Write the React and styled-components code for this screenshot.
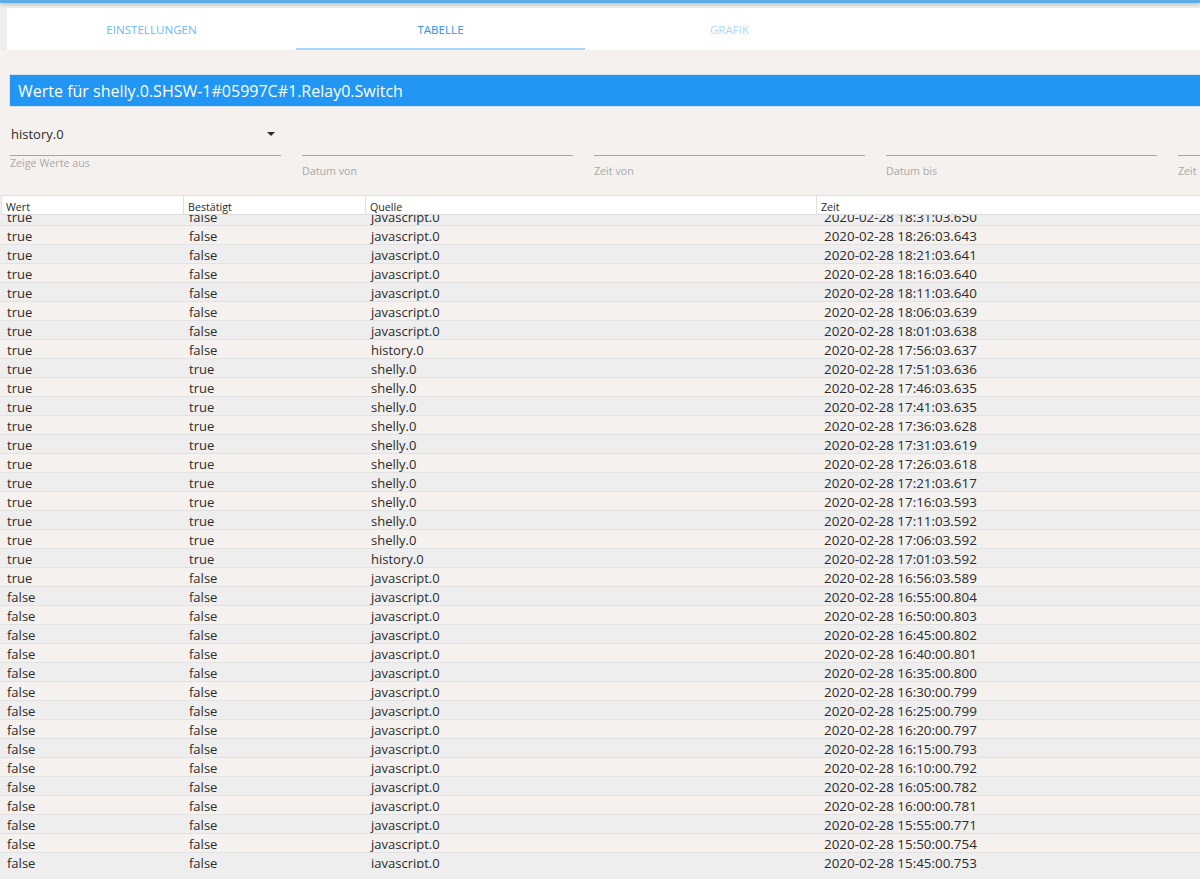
import React from 'react'
import styled, { createGlobalStyle } from 'styled-components'

const GlobalStyle = createGlobalStyle`
  html, body {
    margin: 0;
    height: 100%;
    overflow: hidden;
    background: #eeeeee;
    font-family: "Open Sans", "Noto Sans", "Liberation Sans", sans-serif;
  }
`

const times = [
  '18:31:03.650', '18:26:03.643', '18:21:03.641', '18:16:03.640', '18:11:03.640', '18:06:03.639', '18:01:03.638',
  '17:56:03.637', '17:51:03.636', '17:46:03.635', '17:41:03.635', '17:36:03.628', '17:31:03.619', '17:26:03.618',
  '17:21:03.617', '17:16:03.593', '17:11:03.592', '17:06:03.592', '17:01:03.592', '16:56:03.589', '16:55:00.804',
  '16:50:00.803', '16:45:00.802', '16:40:00.801', '16:35:00.800', '16:30:00.799', '16:25:00.799', '16:20:00.797',
  '16:15:00.793', '16:10:00.792', '16:05:00.782', '16:00:00.781', '15:55:00.771', '15:50:00.754', '15:45:00.753',
]

const rows = times.map((time, i) => {
  let source = 'javascript.0'
  if (i === 7 || i === 18) source = 'history.0'
  else if (i > 7 && i < 18) source = 'shelly.0'
  return {
    value: i < 20 ? 'true' : 'false',
    acked: i > 7 && i < 19 ? 'true' : 'false',
    source,
    time: '2020-02-28 ' + time,
  }
})

const filters = [
  { label: 'Datum von' },
  { label: 'Zeit von' },
  { label: 'Datum bis' },
  { label: 'Zeit bis' },
]

export default function App() {
  return (
    <Page>
      <GlobalStyle />
      <TopBar />
      <Tabs>
        <Tab>EINSTELLUNGEN</Tab>
        <Tab $active>TABELLE</Tab>
        <Tab $disabled>GRAFIK</Tab>
      </Tabs>
      <Content>
        <Title>Werte für shelly.0.SHSW-1#05997C#1.Relay0.Switch</Title>
        <FilterRow>
          <SelectField>
            <SelectValue>
              history.0
              <Caret />
            </SelectValue>
            <FieldLabel>Zeige Werte aus</FieldLabel>
          </SelectField>
          {filters.map(f => (
            <InputField key={f.label}>
              <InputLine />
              <FieldLabel $gap={8}>{f.label}</FieldLabel>
            </InputField>
          ))}
        </FilterRow>
        <HeaderRow>
          <HeaderCell>Wert</HeaderCell>
          <HeaderCell>Bestätigt</HeaderCell>
          <HeaderCell>Quelle</HeaderCell>
          <HeaderCell>Zeit</HeaderCell>
        </HeaderRow>
      </Content>
      <TableBody>
        <Scrolled>
          {rows.map((r, i) => (
            <Row key={r.time} $odd={i % 2 === 0}>
              <Cell>{r.value}</Cell>
              <Cell>{r.acked}</Cell>
              <Cell>{r.source}</Cell>
              <TimeCell>{r.time}</TimeCell>
            </Row>
          ))}
        </Scrolled>
      </TableBody>
    </Page>
  )
}

const Page = styled.div`
  width: 1200px;
  height: 879px;
  overflow: hidden;
`

const TopBar = styled.div`
  height: 3px;
  background: #5fabe8;
  box-shadow: 0 1px 4px rgba(0, 0, 0, 0.3);
`

const Tabs = styled.div`
  display: flex;
  height: 42px;
  margin: 5px 0 0 7px;
  background: #ffffff;
`

const Tab = styled.div`
  width: 289px;
  box-sizing: border-box;
  padding-top: 14px;
  text-align: center;
  font-size: 11.6px;
  line-height: 16px;
  color: ${p => (p.$disabled ? '#afd8f9' : p.$active ? '#2196f3' : '#6db9f6')};
  border-bottom: 2px solid ${p => (p.$active ? '#a9d5fa' : 'transparent')};
`

const Content = styled.div`
  background: #f5f1ee;
  padding-top: 25px;
  height: 165px;
  box-sizing: border-box;
`

const Title = styled.div`
  height: 31px;
  margin-left: 10px;
  padding-left: 8px;
  background: #2196f3;
  box-shadow: 0 0 0 1px rgba(33, 150, 243, 0.15);
  color: #ffffff;
  font-size: 16px;
  line-height: 32px;
`

const FilterRow = styled.div`
  display: flex;
  gap: 21px;
  height: 89px;
  margin-left: 10px;
`

const SelectField = styled.div`
  flex: 0 0 271px;
  padding-top: 18px;
`

const SelectValue = styled.div`
  display: flex;
  justify-content: space-between;
  height: 31px;
  font-size: 13px;
  line-height: 20px;
  color: #2b2b2b;
  border-bottom: 1px solid #a9a5a3;
  padding: 0 6px 0 1px;
`

const Caret = styled.span`
  width: 0;
  height: 0;
  margin-top: 8px;
  border-left: 4px solid transparent;
  border-right: 4px solid transparent;
  border-top: 4px solid #2b2b2b;
`

const FieldLabel = styled.div`
  margin-top: ${p => p.$gap || 0}px;
  font-size: 10.7px;
  line-height: 14px;
  color: #a9a9a9;
`

const InputField = styled.div`
  flex: 0 0 271px;
  padding-top: 49px;
`

const InputLine = styled.div`
  border-bottom: 1px solid #a9a5a3;
`

const columns = '182px 182px 451px 1fr'

const HeaderRow = styled.div`
  display: grid;
  grid-template-columns: ${columns};
  height: 20px;
  margin-left: 1px;
  background: #ffffff;
  border-top: 1px solid #e0e0e0;
  border-bottom: 1px solid #dcdcdc;
  box-sizing: border-box;
`

const HeaderCell = styled.div`
  padding: 4px 0 0 4px;
  border-left: 1px solid #e0e0e0;
  font-size: 10.7px;
  line-height: 14px;
  color: #2b2b2b;
`

const TableBody = styled.div`
  height: 653px;
  overflow: hidden;
`

const Scrolled = styled.div`
  margin-top: -8px;
`

const Row = styled.div`
  display: grid;
  grid-template-columns: ${columns};
  height: 19px;
  box-sizing: border-box;
  background: ${p => (p.$odd ? '#eeeeee' : '#f5f1ee')};
  border-bottom: 1px solid #e2e2e2;
  padding-left: 1px;
`

const Cell = styled.div`
  padding: 2px 0 0 6px;
  font-size: 13px;
  line-height: 16px;
  color: #2b2b2b;
`

const TimeCell = styled(Cell)`
  padding-left: 8px;
  font-size: 13.4px;
`
